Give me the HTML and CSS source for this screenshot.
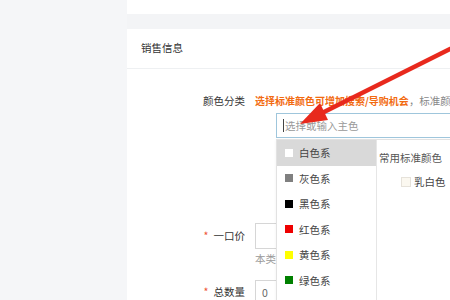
FILE: index.html
```html
<!DOCTYPE html>
<html lang="zh">
<head>
<meta charset="utf-8">
<link rel="stylesheet" href="styles.css">
</head>
<body>
<div class="page">
  <aside class="side"></aside>
  <main class="main">
    <div class="top"></div>
    <div class="band"></div>
    <section class="card">
      <div class="card-head">销售信息</div>
      <div class="form">
        <div class="row row-color">
          <div class="label">颜色分类</div>
          <div class="field">
            <div class="tip"><span class="hl">选择标准颜色可增加搜索/导购机会</span>，标准颜色还可填写颜色备注信息</div>
            <div class="color-input"><span class="caret"></span>选择或输入主色</div>
          </div>
        </div>
        <div class="row row-price">
          <div class="label"><span class="req">*</span>一口价</div>
          <div class="field">
            <div class="box"></div>
            <div class="hint">本类目下，宝贝价格不能低于</div>
          </div>
        </div>
        <div class="row row-qty">
          <div class="label"><span class="req">*</span>总数量</div>
          <div class="field">
            <div class="box qty">0</div>
          </div>
        </div>
      </div>
    </section>
  </main>
</div>

<div class="dropdown">
  <ul class="families">
    <li class="active"><i class="sw" style="background:#ffffff"></i>白色系</li>
    <li><i class="sw" style="background:#808080"></i>灰色系</li>
    <li><i class="sw" style="background:#000000"></i>黑色系</li>
    <li><i class="sw" style="background:#ee0000"></i>红色系</li>
    <li><i class="sw" style="background:#ffff00"></i>黄色系</li>
    <li><i class="sw" style="background:#008000"></i>绿色系</li>
    <li><i class="sw" style="background:#d8e8f0"></i>蓝色系</li>
  </ul>
  <div class="colors">
    <div class="colors-title">常用标准颜色</div>
    <div class="color-item"><i class="sw sw-milk"></i>乳白色</div>
  </div>
</div>

<svg class="arrow" width="450" height="300" viewBox="0 0 450 300">
  <line x1="472" y1="38" x2="322" y2="113" stroke="#e8291d" stroke-width="4.5" stroke-linecap="round"/>
  <polygon points="300,124 320,103 328,120" fill="#e8291d"/>
</svg>
</body>
</html>
```

FILE: styles.css
```css
* { box-sizing: border-box; }
html, body { margin: 0; padding: 0; }
body {
  width: 450px;
  height: 300px;
  overflow: hidden;
  background: #f5f6f8;
  font-family: "Noto Sans CJK SC", "Noto Sans", sans-serif;
  font-size: 10.5px;
  color: #333;
  position: relative;
}
.page { display: flex; height: 300px; overflow: hidden; }
.side { width: 127px; flex: none; background: #f5f6f8; }
.main { flex: 1; display: flex; flex-direction: column; background: #fff; min-width: 0; overflow: hidden; }
.top { height: 14px; flex: none; background: #fff; }
.band { height: 15px; flex: none; background: #f3f4f6; }
.card { flex: 1 0 auto; background: #fff; }
.card-head {
  height: 40px;
  padding-top: 0;
  line-height: 38px;
  padding-left: 14px;
  border-bottom: 1px solid #eef0f2;
  color: #333;
}
.form { padding-top: 23px; }
.row { display: flex; }
.label {
  width: 118px;
  flex: none;
  text-align: right;
  color: #333;
  white-space: nowrap;
}
.field { margin-left: 10px; white-space: nowrap; }
.req { color: #e53; margin-right: 5px; }
.row-color .label { line-height: 18px; }
.tip { line-height: 18px; color: #888; }
.hl { color: #f26b11; font-weight: bold; font-size: 10px; }
.color-input {
  margin-top: 3px;
  margin-left: 21px;
  width: 200px;
  height: 25px;
  border: 1px solid #9fc6dc;
  line-height: 23px;
  padding-left: 6px;
  color: #999;
  display: flex;
  align-items: center;
}
.caret { width: 1px; height: 13px; background: #444; margin-right: 1px; }
.row-price { margin-top: 85px; }
.row-price .label { line-height: 26px; }
.box {
  width: 60px;
  height: 26px;
  border: 1px solid #d6d6d6;
  background: #fff;
}
.hint { color: #999; line-height: 18px; margin-top: 1px; }
.row-qty { margin-top: 12px; }
.row-qty .label { line-height: 24px; }
.qty { padding-left: 6px; line-height: 24px; color: #666; height: 24px; }

.dropdown {
  position: absolute;
  left: 276px;
  top: 139px;
  width: 200px;
  height: 180px;
  background: #fff;
  border: 1px solid #e2e2e2;
  display: flex;
  box-shadow: 0 1px 3px rgba(0,0,0,0.06);
}
.families {
  list-style: none;
  margin: 0;
  padding: 0;
  width: 100px;
  border-right: 1px solid #e6e6e6;
}
.families li {
  height: 25.5px;
  display: flex;
  align-items: center;
  padding-left: 8px;
  color: #444;
}
.families li.active { background: #d9d9d9; }
.sw {
  display: inline-block;
  width: 8px;
  height: 8px;
  margin-right: 6px;
}
.colors { padding: 10px 0 0 2px; }
.colors-title { color: #555; line-height: 16px; }
.color-item {
  margin-top: 8px;
  margin-left: 22px;
  display: flex;
  align-items: center;
  color: #444;
}
.sw-milk {
  background: #fbf8f0;
  border: 1px solid #e6e2da;
  width: 10px;
  height: 10px;
  margin-right: 3px;
}
.arrow { position: absolute; left: 0; top: 0; pointer-events: none; }
```
